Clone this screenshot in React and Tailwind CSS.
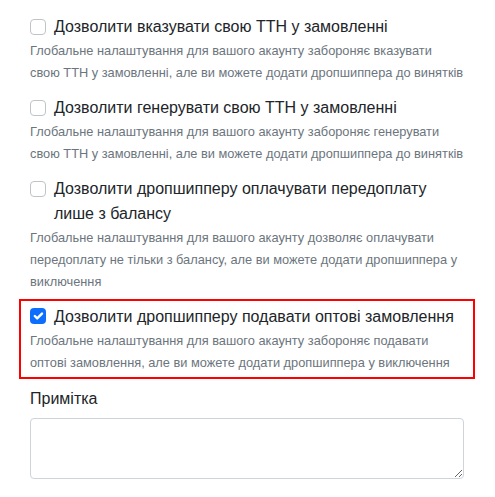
// Dropshipper permission overrides: a list of checkbox options with help text,
// one highlighted, followed by a note textarea.

const options = [
  {
    id: "ttn-show",
    label: "Дозволити вказувати свою ТТН у замовленні",
    help: "Глобальне налаштування для вашого акаунту забороняє вказувати свою ТТН у замовленні, але ви можете додати дропшиппера до винятків",
    checked: false,
  },
  {
    id: "ttn-generate",
    label: "Дозволити генерувати свою ТТН у замовленні",
    help: "Глобальне налаштування для вашого акаунту забороняє генерувати свою ТТН у замовленні, але ви можете додати дропшиппера до винятків",
    checked: false,
  },
  {
    id: "prepay-balance",
    label: "Дозволити дропшипперу оплачувати передоплату лише з балансу",
    help: "Глобальне налаштування для вашого акаунту дозволяє оплачувати передоплату не тільки з балансу, але ви можете додати дропшиппера у виключення",
    checked: false,
  },
  {
    id: "wholesale",
    label: "Дозволити дропшипперу подавати оптові замовлення",
    help: "Глобальне налаштування для вашого акаунту забороняє подавати оптові замовлення, але ви можете додати дропшиппера у виключення",
    checked: true,
    highlighted: true,
  },
];

const Checkbox = ({ checked }) =>
  checked ? (
    <span className="mt-[4px] flex h-4 w-4 shrink-0 items-center justify-center rounded-[4px] bg-[#0d6efd]">
      <svg viewBox="0 0 20 20" className="h-4 w-4">
        <path
          d="M6 10l3 3 6-6"
          fill="none"
          stroke="#fff"
          strokeWidth="3"
          strokeLinecap="round"
          strokeLinejoin="round"
        />
      </svg>
    </span>
  ) : (
    <span className="mt-[5px] h-4 w-4 shrink-0 rounded-[4px] border border-[#bfc4c9] bg-white" />
  );

// The highlighted option gets a red frame that sits outside the content column
const Option = ({ option }) => (
  <div
    className={
      option.highlighted
        ? "mx-[-11px] border-2 border-[#ff0000] px-[9px] pb-[3px] pt-[3px]"
        : ""
    }
  >
    <label className="flex gap-[8px] text-[16px] leading-[25px] text-[#212529]">
      <Checkbox checked={option.checked} />
      <span>{option.label}</span>
    </label>
    <p className="mt-px text-[12.8px] leading-[22px] text-[#6c757d]">
      {option.help}
    </p>
  </div>
);

const App = () => {
  return (
    <div className="min-h-screen bg-white font-['Liberation_Sans',Arial,sans-serif]">
      <div className="ml-[30px] flex w-[434px] flex-col pt-[14px]">
        <div className="flex flex-col gap-[11px]">
          {options.slice(0, 3).map((o) => (
            <Option key={o.id} option={o} />
          ))}
        </div>
        <div className="mt-[6px]">
          <Option option={options[3]} />
        </div>

        <label className="mt-[8px] block text-[16px] leading-[24px] text-[#212529]">
          Примітка
        </label>
        <textarea className="mt-[7px] block h-[61px] w-full rounded-[4px] border border-[#ced4da] px-3 py-1.5" />
      </div>
    </div>
  );
};

export default App;
